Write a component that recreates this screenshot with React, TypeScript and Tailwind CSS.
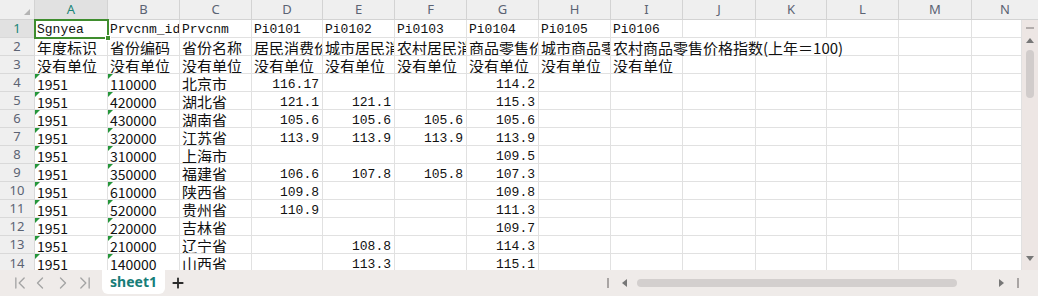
import { ChevronFirst, ChevronLast, ChevronLeft, ChevronRight, Plus } from "lucide-react";

const COLS = ["A", "B", "C", "D", "E", "F", "G", "H", "I", "J", "K", "L", "M", "N"];

const HEAD = ["Sgnyea", "Prvcnm_id", "Prvcnm", "Pi0101", "Pi0102", "Pi0103", "Pi0104", "Pi0105", "Pi0106"];

const NAMES = [
  "年度标识",
  "省份编码",
  "省份名称",
  "居民消费价格指数(上年＝100)",
  "城市居民消费价格指数(上年＝100)",
  "农村居民消费价格指数(上年＝100)",
  "商品零售价格指数(上年＝100)",
  "城市商品零售价格指数(上年＝100)",
  "农村商品零售价格指数(上年＝100)",
];

// code, province, D, E, F, G
const DATA = [
  ["110000", "北京市", "116.17", "", "", "114.2"],
  ["420000", "湖北省", "121.1", "121.1", "", "115.3"],
  ["430000", "湖南省", "105.6", "105.6", "105.6", "105.6"],
  ["320000", "江苏省", "113.9", "113.9", "113.9", "113.9"],
  ["310000", "上海市", "", "", "", "109.5"],
  ["350000", "福建省", "106.6", "107.8", "105.8", "107.3"],
  ["610000", "陕西省", "109.8", "", "", "109.8"],
  ["520000", "贵州省", "110.9", "", "", "111.3"],
  ["220000", "吉林省", "", "", "", "109.7"],
  ["210000", "辽宁省", "", "108.8", "", "114.3"],
  ["140000", "山西省", "", "113.3", "", "115.1"],
];

type Kind = "head" | "mono" | "cjk" | "digit";

interface Cell {
  text: string;
  kind: Kind;
  right?: boolean;
  tri?: boolean;
  spill?: boolean;
}

function cellFor(r: number, c: number): Cell | null {
  if (c > 8) return null;
  if (r === 1) return { text: HEAD[c], kind: "head" };
  if (r === 2) return { text: NAMES[c], kind: "cjk", spill: c === 8 };
  if (r === 3) return { text: "没有单位", kind: "cjk" };
  const d = DATA[r - 4];
  if (c === 0) return { text: "1951", kind: "digit", tri: true };
  if (c === 1) return { text: d[0], kind: "digit", tri: true };
  if (c === 2) return { text: d[1], kind: "cjk" };
  if (c <= 6) return { text: d[c - 1], kind: "mono", right: true };
  return null;
}

const fontOf: Record<Kind, string> = {
  head: "font-['Liberation_Mono',monospace] text-[13px] leading-[15px] text-[#111] pt-[2px]",
  mono: "font-['Liberation_Mono',monospace] text-[13px] leading-[12px] text-[#111] pt-[5px]",
  cjk: "font-['Noto_Sans_CJK_SC',sans-serif] text-[15px] leading-[15px] text-[#111] pt-[2px]",
  digit: "font-['Noto_Sans_CJK_SC',sans-serif] text-[14px] leading-[14px] text-[#111] pt-[3px]",
};

function GridCell({ r, c, last }: { r: number; c: number; last: boolean }) {
  const cell = cellFor(r, c);
  const h = last ? "h-[16px]" : "h-[18px] border-b";
  const selected = r === 1 && c === 0;
  return (
    <div
      className={`relative ${h} border-r border-[#e1e1e1] whitespace-nowrap ${
        cell?.spill || selected ? "overflow-visible" : "overflow-hidden"
      } ${cell?.right ? "text-right pr-[3px]" : "pl-[2px]"} ${cell ? fontOf[cell.kind] : ""}`}
    >
      {cell?.tri && (
        <span className="absolute left-0 top-0 w-0 h-0 border-t-[5px] border-r-[5px] border-t-[#25963a] border-r-transparent" />
      )}
      {cell?.spill ? (
        <span className="absolute left-0 top-0 z-10 h-[17px] bg-white pl-[2px] pr-[2px] pt-[2px]">{cell.text}</span>
      ) : (
        cell?.text
      )}
      {selected && (
        <div className="pointer-events-none absolute -left-px -top-px z-20 w-[75px] h-[20px] border-2 border-[#3f8d2e]">
          <div className="absolute -right-[4px] -bottom-[4px] w-[6px] h-[6px] bg-[#3f8d2e] border border-white" />
        </div>
      )}
    </div>
  );
}

function HeaderRow() {
  return (
    <div className="grid grid-cols-[35px_73px_72px_72px_71px_72px_72px_72px_72px_72px_73px_71px_72px_73px_66px] h-5 bg-[#efefef] font-['Noto_Sans',sans-serif] text-[13px]">
      <div className="flex items-end justify-end pr-[4px] pb-[4px] border-r border-b border-[#d3d3d3]">
        <span className="w-0 h-0 border-b-[6px] border-l-[6px] border-b-[#b4b4b4] border-l-transparent" />
      </div>
      {COLS.map((col, i) => (
        <div
          key={col}
          className={`flex items-center justify-center border-r border-b border-[#d3d3d3] leading-none ${
            i === 0 ? "bg-[#e1e1e1] text-[#1c8577]" : "text-[#5b6373]"
          } ${i === 13 ? "border-r-0" : ""}`}
        >
          {col}
        </div>
      ))}
    </div>
  );
}

function Body() {
  const rows = Array.from({ length: 14 }, (_, i) => i + 1);
  return (
    <div className="grid w-[1022px] content-start grid-cols-[35px_73px_72px_72px_71px_72px_72px_72px_72px_72px_73px_71px_72px_73px_50px]">
      {rows.map((r) => {
        const last = r === 14;
        return [
          <div
            key={`h${r}`}
            className={`flex items-center justify-center ${
              last ? "h-[16px] items-start pt-[3px]" : "h-[18px] border-b"
            } border-r border-[#d9d9d9] font-['Noto_Sans',sans-serif] text-[13px] leading-none overflow-hidden ${
              r === 1 ? "bg-[#e1e1e1] text-[#1c8577]" : "bg-[#efefef] text-[#5b6373]"
            }`}
          >
            {r}
          </div>,
          ...COLS.map((_, c) => <GridCell key={`${r}-${c}`} r={r} c={c} last={last} />),
        ];
      })}
    </div>
  );
}

function VScroll() {
  return (
    <div className="w-4 flex flex-col items-center bg-[#ede6e4]">
      <div className="mt-[7px] w-[8px] h-[2px] bg-[#b3adac]" />
      <div className="mt-[9px] w-0 h-0 border-b-[5px] border-l-[4px] border-r-[4px] border-b-[#777] border-l-transparent border-r-transparent" />
      <div className="mt-[7px] w-[8px] h-[48px] rounded-full bg-[#d1cccb]" />
      <div className="flex-1" />
      <div className="mb-[9px] w-0 h-0 border-t-[5px] border-l-[4px] border-r-[4px] border-t-[#777] border-l-transparent border-r-transparent" />
    </div>
  );
}

function TabBar() {
  return (
    <div className="flex h-[26px] items-center bg-[#efebe9]">
      <div className="flex items-center pl-[10px] text-[#a4a4a4]">
        <ChevronFirst size={20} strokeWidth={1.6} />
        <ChevronLeft size={20} strokeWidth={1.6} />
        <ChevronRight size={20} strokeWidth={1.6} className="ml-[3px]" />
        <ChevronLast size={20} strokeWidth={1.6} className="ml-[2px]" />
      </div>
      <div className="ml-[7px] self-stretch mb-[2px] w-[63px] flex items-center justify-center bg-white rounded-b-[6px] font-['Noto_Sans',sans-serif] font-bold text-[14px] text-[#177d78] leading-none">
        sheet1
      </div>
      <Plus size={16} strokeWidth={2.75} className="ml-[5px] text-[#2a2a2a]" />
      <div className="flex-1" />
      <div className="flex items-center pr-[19px]">
        <div className="w-[2px] h-[10px] bg-[#a9a5a4]" />
        <div className="ml-[13px] w-0 h-0 border-r-[5px] border-t-[4px] border-b-[4px] border-r-[#777] border-t-transparent border-b-transparent" />
        <div className="ml-[10px] w-[320px] h-[8px] rounded-full bg-[#d3cfce]" />
        <div className="ml-[42px] w-0 h-0 border-l-[5px] border-t-[4px] border-b-[4px] border-l-[#777] border-t-transparent border-b-transparent" />
        <div className="ml-[13px] w-[2px] h-[10px] bg-[#a9a5a4]" />
      </div>
    </div>
  );
}

export default function App() {
  return (
    <div className="w-[1038px] h-[296px] overflow-hidden bg-white flex flex-col select-none">
      <HeaderRow />
      <div className="flex h-[250px]">
        <Body />
        <VScroll />
      </div>
      <TabBar />
    </div>
  );
}
